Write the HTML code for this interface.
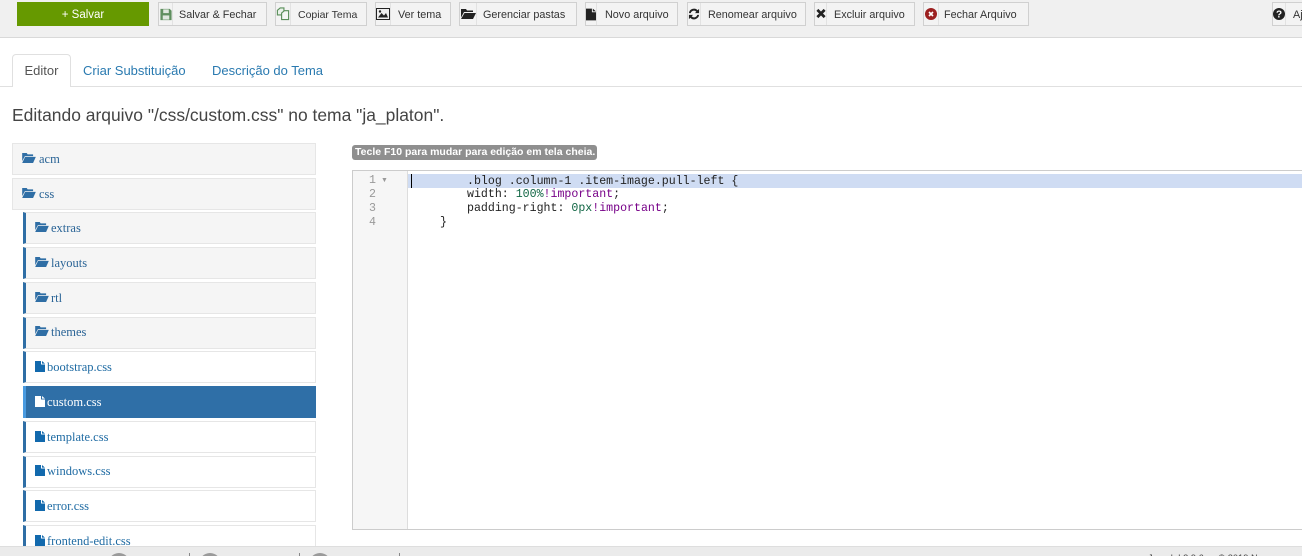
<!DOCTYPE html>
<html lang="pt">
<head>
<meta charset="utf-8">
<title>Editor</title>
<style>
html,body{margin:0;padding:0;width:1302px;height:556px;overflow:hidden;background:#fff;font-family:"Liberation Sans",sans-serif}
#w{position:relative;width:1302px;height:556px;overflow:hidden}
.a{position:absolute;box-sizing:border-box}
#bar{left:0;top:0;width:1302px;height:38px;background:#f0f0f0;border-bottom:1px solid #d9d9d9}
.b{position:absolute;box-sizing:border-box;top:2px;height:24px;background:#f3f3f3;border:1px solid #d0d0d0;font-size:10.8px;line-height:24px;color:#333;white-space:nowrap}
.b svg{position:absolute;left:1px;top:5px}
.b span{position:absolute;top:0}
.b i{position:absolute;top:0;bottom:0;width:1px;background:#e2e2e2}
.t{position:absolute;box-sizing:border-box;height:32px;border:1px solid #e6e6e6;font-family:"Liberation Serif",serif;font-size:12.5px;line-height:30px;color:#2a6496;background:#f5f5f5;white-space:nowrap}
.t.f{background:#fff;color:#1f6ba3}
.t.s{left:12px;width:304px}
.t.n{left:23px;width:293px;border-left:3px solid #2f6ea5}
.t svg{position:absolute}
.t span{position:absolute;top:0}
.t.cur{background:#2f6fa7;border:0;border-left:3px solid #4a9be0;color:#fff;line-height:32px}
.ln{position:absolute;left:353px;width:23px;text-align:right;font:11.6px/14px "Liberation Mono",monospace;color:#999}
.cd{position:absolute;white-space:pre;font:11.6px/14px "Liberation Mono",monospace;color:#222}
</style>
</head>
<body>
<div id="w">
<div class="a" id="bar"></div>

<div class="a" style="left:17px;top:2px;width:132px;height:24px;background:#669900;color:#fff;font-size:11.500px;line-height:26px;text-align:center">+ Salvar</div>

<div class="b" style="left:158px;width:109px"><svg width="12" height="13" viewBox="0 0 12 14"><path d="M0 1h10l2 2v10H0z" fill="#5f8f5f"/><rect x="3" y="1.500" width="6" height="4" fill="#dfe8df"/><rect x="2.500" y="8" width="7" height="4.500" fill="#dfe8df"/></svg><i style="left:13px"></i><span style="left:20px">Salvar &amp; Fechar</span></div>

<div class="b" style="left:275px;width:92px;font-size:10.500px"><svg width="14" height="14" viewBox="0 0 14 15" style="left:0;top:4px"><path d="M1 3.500 4 1h4v7.500H1z" fill="#e9f2e9" stroke="#5a8f5a" stroke-width="1.200"/><path d="M5.500 6.500 8.500 4H13v9.500H5.500z" fill="#f3f7f3" stroke="#5a8f5a" stroke-width="1.200"/></svg><i style="left:14px"></i><span style="left:22px">Copiar Tema</span></div>

<div class="b" style="left:375px;width:76px"><svg width="14" height="12" viewBox="0 0 14 12" style="left:0"><rect x=".5" y=".5" width="13" height="11" fill="#eee" stroke="#222"/><path d="M2 9.500 5.500 5l2.500 2.500L10 5l2 4.500z" fill="#222"/><circle cx="4" cy="3.500" r="1.200" fill="#222"/></svg><i style="left:14px"></i><span style="left:22px">Ver tema</span></div>

<div class="b" style="left:459px;width:118px"><svg width="15" height="11" viewBox="0 0 15 11"><path d="M0 1h5l1 1.500h6V4H3L0 9.500z" fill="#222"/><path d="M3.500 5H15l-3 6H0z" fill="#222"/></svg><i style="left:16px"></i><span style="left:23px">Gerenciar pastas</span></div>

<div class="b" style="left:585px;width:93px"><svg width="10" height="13" viewBox="0 0 11 13" style="left:0"><path d="M0 0h6.500v4H11v9H0zM7.500 0 11 3H7.500z" fill="#222"/></svg><i style="left:10px"></i><span style="left:19px">Novo arquivo</span></div>

<div class="b" style="left:687px;width:119px"><svg width="12" height="12" viewBox="0 0 13 13" style="left:0"><path d="M1 5.500A5.500 5.500 0 0 1 10.500 2.500L12 1v4.500H7.500L9 4A3.500 3.500 0 0 0 3 5.500zM12 7.500A5.500 5.500 0 0 1 2.500 10.500L1 12V7.500h4.500L4 9a3.500 3.500 0 0 0 6-1.500z" fill="#222"/></svg><i style="left:12px"></i><span style="left:20px">Renomear arquivo</span></div>

<div class="b" style="left:814px;width:101px"><svg width="10" height="11" viewBox="0 0 11 11"><path d="M1.500 1.500l8 8M9.500 1.500l-8 8" stroke="#222" stroke-width="3"/></svg><i style="left:11px"></i><span style="left:19px">Excluir arquivo</span></div>

<div class="b" style="left:923px;width:106px"><svg width="12" height="12" viewBox="0 0 12 12"><circle cx="6" cy="6" r="6" fill="#9c2020"/><path d="M4 4l4 4M8 4l-4 4" stroke="#fff" stroke-width="1.600"/></svg><i style="left:14px"></i><span style="left:20px">Fechar Arquivo</span></div>

<div class="b" style="left:1272px;width:40px"><svg width="12" height="12" viewBox="0 0 12 12" style="left:0"><circle cx="6" cy="6" r="6" fill="#222"/><text x="6" y="9.500" font-size="10" font-weight="bold" font-family="Liberation Sans" fill="#fff" text-anchor="middle">?</text></svg><i style="left:12px"></i><span style="left:20px">Ajuda</span></div>

<!-- tabs -->
<div class="a" style="left:0;top:86px;width:1302px;height:1px;background:#e0e0e0"></div>
<div class="a" style="left:12px;top:54px;width:59px;height:33px;background:#fff;border:1px solid #e0e0e0;border-bottom:0;border-radius:4px 4px 0 0;font-size:13px;line-height:32px;color:#555;text-align:center">Editor</div>
<div class="a" style="left:83px;top:54px;height:33px;font-size:13px;line-height:33px;color:#2a7ab0;white-space:nowrap">Criar Substituição</div>
<div class="a" style="left:212px;top:54px;height:33px;font-size:13px;line-height:33px;color:#2a7ab0;white-space:nowrap">Descrição do Tema</div>

<div class="a" style="left:12px;top:103px;font-size:17.470px;line-height:25px;color:#444;white-space:nowrap">Editando arquivo "/css/custom.css" no tema "ja_platon".</div>

<!-- tree -->
<svg width="0" height="0" style="position:absolute"><defs>
<symbol id="fo" viewBox="0 0 15 11"><path d="M0 0h5l1 1.500h6V3.500H3L0 9z" fill="#2f6ea5"/><path d="M3.200 4.200H15l-3 6.800H0z" fill="#2f6ea5"/></symbol>
<symbol id="fi" viewBox="0 0 10 11"><path d="M0 0h6v3.500h4V11H0zM7 0l3 2.600H7z" fill="currentColor"/></symbol>
</defs></svg>

<div class="t s" style="top:143px"><svg width="14" height="10" style="left:9px;top:9px"><use href="#fo"/></svg><span style="left:26px">acm</span></div>
<div class="t s" style="top:178px"><svg width="14" height="10" style="left:9px;top:9px"><use href="#fo"/></svg><span style="left:26px">css</span></div>
<div class="t n" style="top:212px"><svg width="14" height="10" style="left:9px;top:9px"><use href="#fo"/></svg><span style="left:25px">extras</span></div>
<div class="t n" style="top:247px"><svg width="14" height="10" style="left:9px;top:9px"><use href="#fo"/></svg><span style="left:25px">layouts</span></div>
<div class="t n" style="top:282px"><svg width="14" height="10" style="left:9px;top:9px"><use href="#fo"/></svg><span style="left:25px">rtl</span></div>
<div class="t n" style="top:317px"><svg width="14" height="10" style="left:9px;top:8px"><use href="#fo"/></svg><span style="left:25px;top:-1px">themes</span></div>
<div class="t n f" style="top:351px"><svg width="10" height="11" style="left:9px;top:9px;color:#1269ad"><use href="#fi"/></svg><span style="left:21px">bootstrap.css</span></div>
<div class="t n cur" style="top:386px"><svg width="10" height="11" style="left:9px;top:10px;color:#fff"><use href="#fi"/></svg><span style="left:21px">custom.css</span></div>
<div class="t n f" style="top:421px"><svg width="10" height="11" style="left:9px;top:9px;color:#1269ad"><use href="#fi"/></svg><span style="left:21px">template.css</span></div>
<div class="t n f" style="top:456px"><svg width="10" height="11" style="left:9px;top:8px;color:#1269ad"><use href="#fi"/></svg><span style="left:21px;top:-1px">windows.css</span></div>
<div class="t n f" style="top:490px"><svg width="10" height="11" style="left:9px;top:9px;color:#1269ad"><use href="#fi"/></svg><span style="left:21px">error.css</span></div>
<div class="t n f" style="top:525px"><svg width="10" height="11" style="left:9px;top:9px;color:#1269ad"><use href="#fi"/></svg><span style="left:21px">frontend-edit.css</span></div>

<!-- tooltip -->
<div class="a" style="left:352px;top:145px;width:245px;height:15px;background:#8f8f8f;border-radius:3px;color:#fff;font-size:10.500px;font-weight:bold;line-height:15px;padding-left:3px;white-space:nowrap">Tecle F10 para mudar para edição em tela cheia.</div>

<!-- editor -->
<div class="a" style="left:352px;top:170px;width:960px;height:360px;border:1px solid #ccc;background:#fff"></div>
<div class="a" style="left:353px;top:171px;width:55px;height:358px;background:#f6f6f6;border-right:1px solid #ddd"></div>
<div class="a" style="left:408px;top:174px;width:894px;height:14px;background:#cfdcf3"></div>
<div class="a" style="left:411px;top:174px;width:1px;height:14px;background:#000"></div>
<div class="ln" style="top:174px">1</div>
<div class="a" style="left:381px;top:174px;font-size:7px;line-height:14px;color:#999">▼</div>
<div class="ln" style="top:188px">2</div>
<div class="ln" style="top:202px">3</div>
<div class="ln" style="top:216px">4</div>
<div class="cd" style="left:467px;top:175px">.blog .column-1 .item-image.pull-left {</div>
<div class="cd" style="left:467px;top:188px">width: <span style="color:#116644">100%</span><span style="color:#708">!important</span>;</div>
<div class="cd" style="left:467px;top:202px">padding-right: <span style="color:#116644">0px</span><span style="color:#708">!important</span>;</div>
<div class="cd" style="left:440px;top:216px">}</div>

<!-- footer -->
<div class="a" style="left:0;top:546px;width:1302px;height:10px;background:#ebebeb;border-top:1px solid #dedede"></div>
<div class="a" style="left:108px;top:553px;width:22px;height:22px;border-radius:50%;background:#9a9a9a"></div>
<div class="a" style="left:189px;top:553px;width:1px;height:3px;background:#888"></div>
<div class="a" style="left:199px;top:553px;width:22px;height:22px;border-radius:50%;background:#9a9a9a"></div>
<div class="a" style="left:299px;top:553px;width:1px;height:3px;background:#888"></div>
<div class="a" style="left:309px;top:553px;width:22px;height:22px;border-radius:50%;background:#9a9a9a"></div>
<div class="a" style="left:399px;top:553px;width:1px;height:3px;background:#888"></div>
<div class="a" style="left:1148px;top:552px;font-size:9.300px;line-height:12px;color:#444;white-space:nowrap">Joomla! 3.9.6 — © 2019 Nome</div>
</div>
</body>
</html>
